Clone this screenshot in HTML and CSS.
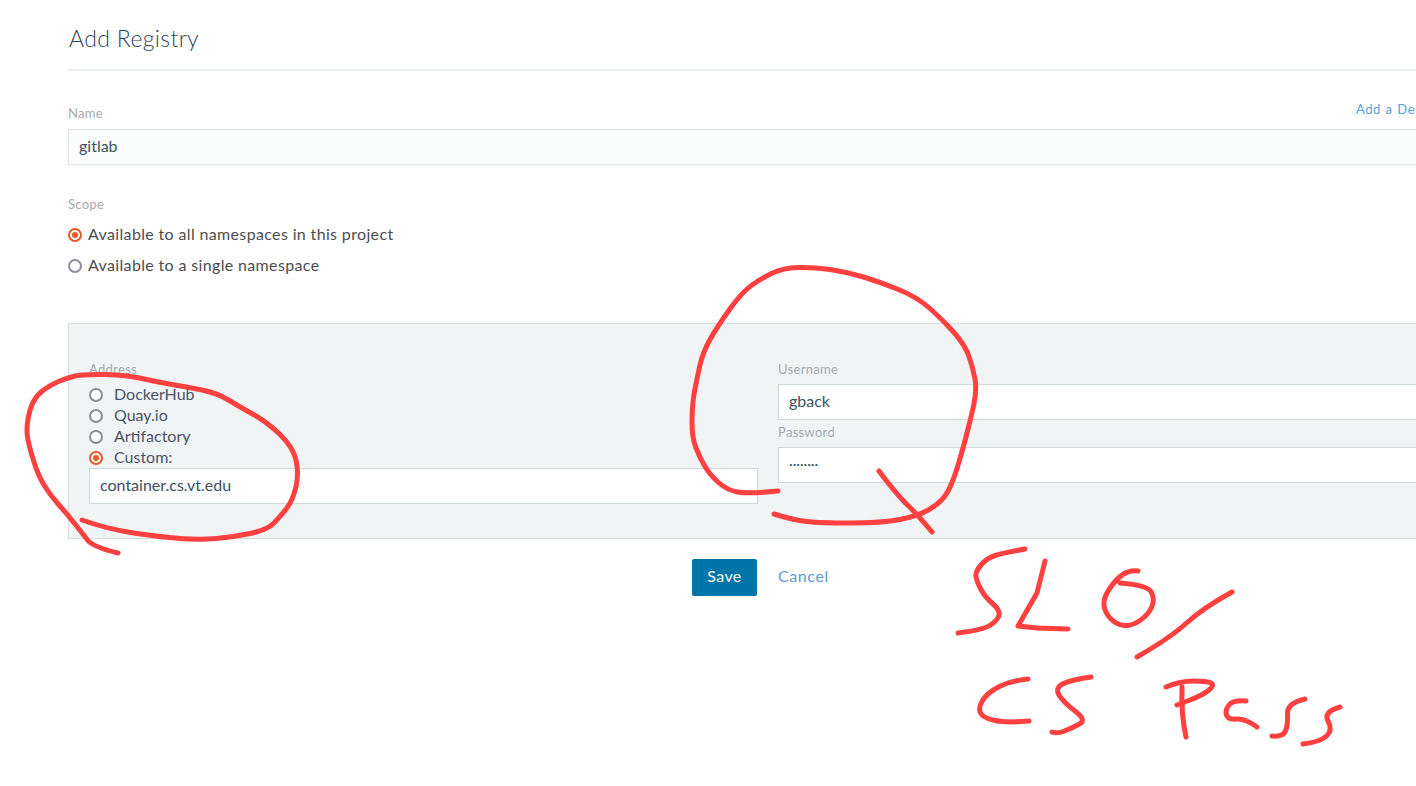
FILE: index.html
```html
<!DOCTYPE html>
<html lang="en">
<head>
<meta charset="utf-8">
<title>Add Registry</title>
<link rel="stylesheet" href="styles.css">
</head>
<body>
<main class="page">
  <header class="head"><h1 class="title">Add Registry</h1></header>

  <div class="name-row">
    <div class="label-row"><div class="label">Name</div><a class="add-desc">Add a Description</a></div>
    <div class="input input-soft">gitlab</div>
  </div>

  <section class="scope">
    <div class="label">Scope</div>
    <div class="scope-opt"><span class="radio on"></span>Available to all namespaces in this project</div>
    <div class="scope-opt"><span class="radio"></span>Available to a single namespace</div>
  </section>

  <section class="panel">
    <div class="col col-left">
      <div class="label">Address</div>
      <div class="addr-opt"><span class="radio"></span>DockerHub</div>
      <div class="addr-opt"><span class="radio"></span>Quay.io</div>
      <div class="addr-opt"><span class="radio"></span>Artifactory</div>
      <div class="addr-opt"><span class="radio on"></span>Custom:</div>
      <div class="input">container.cs.vt.edu</div>
    </div>
    <div class="col col-right">
      <div class="label">Username</div>
      <div class="input">gback</div>
      <div class="label label-pw">Password</div>
      <div class="input pw">········</div>
    </div>
  </section>

  <div class="actions">
    <button class="save">Save</button>
    <a class="cancel">Cancel</a>
  </div>
</main>

<svg class="ink" width="1416" height="786" viewBox="0 0 1416 786" fill="none" stroke="#ff4040" stroke-width="5" stroke-linecap="round" stroke-linejoin="round">
  <path d="M118 553 Q93 547 87.5 540 Q82 533 75 524 Q68 515 59 505 Q50 495 44 485 Q38 475 34 462 Q30 450 28 440 Q26 430 28 419 Q30 408 33.5 401.5 Q37 395 43.5 390 Q50 385 58.5 381.5 Q67 378 75 376 Q83 374 105 374.5 Q127 375 142 378.5 Q157 382 172 384.5 Q187 387 202 390 Q217 393 228.5 400 Q240 407 253.5 414.5 Q267 422 280 434.5 Q293 447 296 460 Q299 473 296 486.5 Q293 500 286.5 508.5 Q280 517 273.5 523.5 Q267 530 250 533.5 Q233 537 216.5 538.5 Q200 540 180 538.5 Q160 537 133.5 533 Q107 529 82 520"/>
  <path d="M778 491 Q748 494 737.5 492 Q727 490 718.5 482.5 Q710 475 705 466.5 Q700 458 696 448 Q692 438 692 421.5 Q692 405 694.5 391.5 Q697 378 700 365 Q703 352 710 339.5 Q717 327 729.5 309.5 Q742 292 752 285 Q762 278 772.5 273 Q783 268 798 267.5 Q813 267 830 269.5 Q847 272 863.5 277 Q880 282 898.5 289.5 Q917 297 930 308.5 Q943 320 954 332.5 Q965 345 969 356.5 Q973 368 975 379 Q977 390 973.5 406 Q970 422 966 437 Q962 452 957.5 467 Q953 482 947.5 492 Q942 502 930 509 Q918 516 900 519.5 Q882 523 851 523 Q820 523 806.5 521.5 Q793 520 774 514"/>
  <path d="M879 471 Q897 495 907.5 505 Q918 515 932 532"/>
  <path d="M1025 549 Q1003 553 995 555.5 Q987 558 981 565 Q975 572 976 577 Q977 582 981 589.5 Q985 597 992.5 603.5 Q1000 610 999 615 Q998 620 990.5 625 Q983 630 958 633"/>
  <path d="M1045 561 L1037 593 L1018 626 L1037 628 L1068 629"/>
  <path d="M1138 571 Q1130 570 1123.5 574 Q1117 578 1110 588 Q1103 598 1104 605.5 Q1105 613 1111 619 Q1117 625 1124.5 625.5 Q1132 626 1140 620.5 Q1148 615 1151.5 607.5 Q1155 600 1151.5 592.5 Q1148 585 1120 583"/>
  <path d="M1232 592 Q1203 608 1186.5 623 Q1170 638 1137 657"/>
  <path d="M1028 679 Q1010 681 998.5 687 Q987 693 982.5 700.5 Q978 708 980.5 713 Q983 718 995 720.5 Q1007 723 1029 721"/>
  <path d="M1091 677 Q1070 680 1062.5 684 Q1055 688 1059 695 Q1063 702 1075 711 Q1087 720 1079.5 724 Q1072 728 1064.5 731 Q1057 734 1052 732"/>
  <path d="M1166 687 Q1180 681 1193.5 681 Q1207 681 1211 683 Q1215 685 1209 690 Q1203 695 1190 700 L1177 705"/>
  <path d="M1182 687 Q1181 715 1186 737"/>
  <path d="M1246 701 Q1233 700 1229 705 Q1225 710 1226.5 715 Q1228 720 1236.5 719 Q1245 718 1257 727"/>
  <path d="M1305 699 Q1287 703 1287.5 714 Q1288 725 1285.5 731 Q1283 737 1272 736"/>
  <path d="M1340 707 Q1323 712 1328 721 Q1333 730 1326.5 736 Q1320 742 1303 744"/>
</svg>
</body>
</html>
```

FILE: styles.css
```css
html, body { margin: 0; padding: 0; overflow: hidden; background: #fff; }
body { width: 1416px; height: 786px; position: relative; font-family: Lato, "Noto Sans", sans-serif; color: #4a5568; }
.page { margin-left: 68px; width: 1440px; }
.head { height: 69px; border-bottom: 2px solid #e8edee; }
.title { margin: 0 0 0 1px; padding-top: 24px; font-size: 23px; line-height: 28px; font-weight: 300; color: #2f4358; letter-spacing: 0.35px; }
.name-row { margin-top: 33px; }
.label-row { position: relative; height: 18px; }
.label { font-size: 13px; line-height: 18px; color: #a4abaf; letter-spacing: 0.3px; }
.add-desc { position: absolute; left: 1288px; top: -4px; font-size: 13px; line-height: 18px; color: #5a9fe0; letter-spacing: 0.5px; word-spacing: 1px; white-space: nowrap; }
.input { box-sizing: border-box; height: 36px; padding: 0 10px; line-height: 31px; font-size: 16px; background: #fff; border: 1px solid #d0d8dc; color: #3d4f63; }
.input-soft { background: #fbfdfc; border-color: #dfe6e6; margin-top: 7px; }
.scope { margin-top: 30px; }
.scope .label { margin-bottom: 6px; }
.scope-opt { box-sizing: border-box; display: flex; align-items: center; height: 31px; padding-bottom: 2px; font-size: 16px; color: #4d4d4d; letter-spacing: 0.35px; }
.radio { box-sizing: border-box; width: 14px; height: 14px; margin-top: 2px; border-radius: 50%; border: 2px solid #8f8f9c; background: #fff; margin-right: 6px; flex: none; position: relative; }
.radio.on { border-color: #e8592a; }
.radio.on::after { content: ""; position: absolute; left: 2px; top: 2px; width: 6px; height: 6px; border-radius: 50%; background: #e8592a; }
.panel { margin-top: 42px; box-sizing: border-box; height: 216px; display: flex; gap: 20px; padding: 36px 0 0 20px; background: #f1f4f5; border: 1px solid #d6dde0; }
.col-left { width: 669px; }
.col-left .label { margin-bottom: 6px; }
.col-right { flex: 1; }
.col-right .label { padding-bottom: 6px; }
.col-right .label-pw { margin-top: 3px; }
.addr-opt { box-sizing: border-box; display: flex; align-items: center; height: 21px; padding-bottom: 2px; font-size: 16px; color: #4a5568; }
.addr-opt .radio { margin-right: 11px; }
.pw { font-size: 14px; }
.actions { display: flex; align-items: center; margin-top: 20px; padding-left: 624px; gap: 21px; }
.save { box-sizing: border-box; width: 65px; height: 37px; padding: 0 0 5px; border: 0; border-radius: 2px; background: #0075a8; color: #f2f8fb; font: 16px Lato, sans-serif; letter-spacing: 0.4px; }
.cancel { padding-bottom: 5px; font-size: 16px; color: #5b9bd5; letter-spacing: 0.6px; }
.ink { position: absolute; left: 0; top: 0; pointer-events: none; }
```
